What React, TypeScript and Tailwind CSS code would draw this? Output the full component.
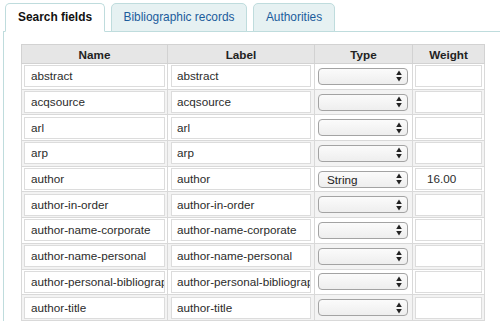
import { useState } from 'react';

type Field = { name: string; label: string; type?: string; weight?: string };

const fields: Field[] = [
  { name: 'abstract', label: 'abstract' },
  { name: 'acqsource', label: 'acqsource' },
  { name: 'arl', label: 'arl' },
  { name: 'arp', label: 'arp' },
  { name: 'author', label: 'author', type: 'String', weight: '16.00' },
  { name: 'author-in-order', label: 'author-in-order' },
  { name: 'author-name-corporate', label: 'author-name-corporate' },
  { name: 'author-name-personal', label: 'author-name-personal' },
  { name: 'author-personal-bibliography', label: 'author-personal-bibliography' },
  { name: 'author-title', label: 'author-title' },
];

const tabs = [
  { id: 'search', label: 'Search fields', width: 'w-[100px]' },
  { id: 'biblio', label: 'Bibliographic records', width: 'w-[136px]' },
  { id: 'auth', label: 'Authorities', width: 'w-[82px]' },
];

function TextBox({ value, className }: { value?: string; className?: string }) {
  return (
    <div
      className={`h-[22px] border border-[#dcdcdc] bg-white text-[11.7px] leading-[20px] text-[#2b2b2b] overflow-hidden whitespace-nowrap ${className ?? ''}`}
    >
      {value}
    </div>
  );
}

function SelectBox({ value }: { value?: string }) {
  return (
    <div className="ml-[3px] w-[90px] h-[17px] flex items-center justify-between rounded-[4px] border border-[#a3a3a3] bg-gradient-to-b from-[#fbfbfb] to-[#eeeeee] pl-[8px] pr-[5px] text-[11.7px] leading-[15px] text-[#222]">
      <span>{value}</span>
      {/* up/down chevrons */}
      <svg width="6" height="12" viewBox="0 0 6 12" className="shrink-0">
        <path d="M3 0.5 L5.8 5 L0.2 5 Z" fill="#222" />
        <path d="M3 11.5 L5.8 7 L0.2 7 Z" fill="#222" />
      </svg>
    </div>
  );
}

export default function App() {
  const [active, setActive] = useState('search');

  return (
    <div
      className="w-[500px] h-[322px] overflow-hidden bg-white"
      style={{ fontFamily: '"Liberation Sans", Arial, sans-serif' }}
    >
      <div className="ml-[3px] w-[540px]">
        {/* Tabs */}
        <div className="flex gap-[6px] pl-[2px] pt-[3px] border-b border-[#bfdcdd]">
          {tabs.map((t) => {
            const on = t.id === active;
            return (
              <button
                key={t.id}
                onClick={() => setActive(t.id)}
                className={`${t.width} h-[29px] -mb-px rounded-t-[5px] border text-[11.9px] ${
                  on
                    ? 'bg-white border-[#bfdcdd] border-b-white font-bold text-[#111]'
                    : 'bg-[#e6f1f2] border-[#bfdcdd] text-[#1b5c9c]'
                }`}
              >
                {t.label}
              </button>
            );
          })}
        </div>

        {/* Panel */}
        <div className="border-l border-[#bfdcdd] pt-[12px] pl-[17px]">
          <table className="table-fixed border-collapse w-[463px] text-[11.7px]">
            <colgroup>
              <col className="w-[146px]" />
              <col className="w-[147px]" />
              <col className="w-[98px]" />
              <col className="w-[72px]" />
            </colgroup>
            <thead>
              <tr className="h-[19px] bg-[#e6e6e6] text-[#222]">
                {['Name', 'Label', 'Type', 'Weight'].map((h) => (
                  <th key={h} className="border border-[#d2d2d2] p-0 font-bold leading-[17px]">
                    {h}
                  </th>
                ))}
              </tr>
            </thead>
            <tbody>
              {fields.map((f, i) => (
                <tr key={f.name} className={`h-[25.7px] ${i % 2 ? 'bg-[#f3f3f3]' : 'bg-white'}`}>
                  <td className="border border-[#d9d9d9] px-[2px] py-0">
                    <TextBox value={f.name} className="px-[6px]" />
                  </td>
                  <td className="border border-[#d9d9d9] px-[3px] py-0">
                    <TextBox value={f.label} className="px-[5px]" />
                  </td>
                  <td className="border border-[#d9d9d9] p-0">
                    <SelectBox value={f.type} />
                  </td>
                  <td className="border border-[#d9d9d9] px-[2px] py-0">
                    <TextBox value={f.weight} className="pl-[11px]" />
                  </td>
                </tr>
              ))}
            </tbody>
          </table>
        </div>
      </div>
    </div>
  );
}
